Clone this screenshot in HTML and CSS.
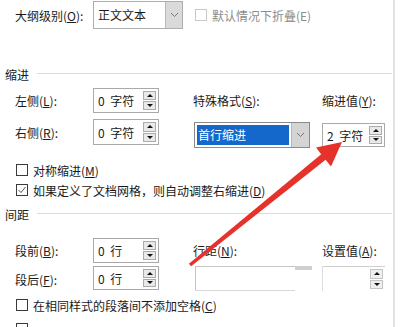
FILE: index.html
```html
<!DOCTYPE html>
<html lang="zh-CN">
<head>
<meta charset="utf-8">
<title>段落</title>
<link rel="stylesheet" href="styles.css">
</head>
<body>

<div class="dlg">

	<div class="row row-outline">
		<span class="lbl lbl-wide">大纲级别(<u>O</u>):</span>
		<div class="combo combo-outline">
			<span class="combo-text">正文文本</span>
			<span class="drop"><svg width="9" height="6" viewBox="0 0 9 6"><polyline points="1,1 4.5,4.5 8,1" fill="none" stroke="#777" stroke-width="1"/></svg></span>
		</div>
		<label class="chk chk-off"><span class="box"></span>默认情况下折叠(E)</label>
	</div>

	<div class="sect sect-indent"><span>缩进</span><i class="rule"></i></div>

	<div class="grid row-left">
		<span class="lbl">左侧(<u>L</u>):</span>
		<div class="num"><span class="val">0 字符</span><span class="spin"><b class="up"></b><b class="down"></b></span></div>
		<span class="lbl">特殊格式(<u>S</u>):</span>
		<span class="lbl">缩进值(<u>Y</u>):</span>
	</div>

	<div class="grid row-right">
		<span class="lbl lbl-tall">右侧(<u>R</u>):</span>
		<div class="num num-right"><span class="val">0 字符</span><span class="spin"><b class="up"></b><b class="down"></b></span></div>
		<div class="combo combo-sel">
			<span class="combo-text"><span class="hl">首行缩进</span></span>
			<span class="drop"><svg width="9" height="6" viewBox="0 0 9 6"><polyline points="1,1 4.5,4.5 8,1" fill="none" stroke="#777" stroke-width="1"/></svg></span>
		</div>
		<div class="num num-chars"><span class="val">2 字符</span><span class="spin"><b class="up"></b><b class="down"></b></span></div>
	</div>

	<label class="chk chk-mirror"><span class="box"></span>对称缩进(<u>M</u>)</label>
	<label class="chk chk-grid"><span class="box box-on"><svg width="10" height="10" viewBox="0 0 10 10"><polyline points="1.5,5 4,7.5 8.5,2" fill="none" stroke="#555" stroke-width="1"/></svg></span>如果定义了文档网格，则自动调整右缩进(<u>D</u>)</label>

	<div class="sect sect-space"><span>间距</span><i class="rule"></i></div>

	<div class="grid row-before">
		<span class="lbl">段前(<u>B</u>):</span>
		<div class="num num-before"><span class="val">0 行</span><span class="spin"><b class="up"></b><b class="down"></b></span></div>
		<span class="lbl">行距(<u>N</u>):</span>
		<span class="lbl">设置值(<u>A</u>):</span>
	</div>

	<div class="grid row-after">
		<span class="lbl lbl-tall">段后(<u>F</u>):</span>
		<div class="num num-after"><span class="val">0 行</span><span class="spin"><b class="up"></b><b class="down"></b></span></div>
		<div class="faint-combo"><i class="faint-drop"></i></div>
		<div class="faint-num"><span class="spin"><b class="up"></b><b class="down"></b></span></div>
	</div>

	<label class="chk chk-nospace"><span class="box"></span>在相同样式的段落间不添加空格(<u>C</u>)</label>
	<label class="chk chk-last"><span class="box"></span></label>

	<svg class="arrow" width="400" height="327" viewBox="0 0 400 327">
		<polygon points="188.9,263.8 321.2,154.2 316,147.5 342,142 331,166.5 325.6,159.8 191.1,266.2" fill="#e5332c"/>
	</svg>

</div>

</body>
</html>
```

FILE: styles.css
```css
html, body {
	margin: 0;
	padding: 0;
	height: 100%;
	overflow: hidden;
}

body {
	background: #fff;
	font-family: "Noto Sans CJK SC", "Microsoft YaHei", sans-serif;
	font-size: 12px;
	color: #1a1a1a;
}

u {
	text-decoration: underline;
	text-underline-offset: 1px;
}

.dlg {
	position: relative;
	width: 393px;
	height: 327px;
	border-right: 2px solid #e2e2e2;
}

/* rows */
.row {
	display: flex;
	align-items: center;
	height: 28px;
	padding-left: 15px;
}

.row-outline {
	padding-top: 1px;
}

.lbl-wide {
	width: 78px;
}

.grid {
	display: grid;
	grid-template-columns: 78px 100px 129px 71px;
	padding-left: 15px;
	align-items: center;
}

.lbl-tall {
	line-height: 27px;
}

.row-left {
	margin-top: 6px;
	height: 25px;
}

.row-right {
	margin-top: 6px;
	height: 30px;
	align-items: start;
}

.row-before {
	margin-top: 16px;
	height: 24px;
}

.row-after {
	margin-top: 4px;
	height: 25px;
	align-items: start;
}

/* section headings */
.sect {
	display: flex;
	align-items: center;
	height: 16px;
	padding-left: 5px;
}

.sect .rule {
	flex: 1;
	height: 1px;
	background: #dcdcdc;
	margin: -2px 1px 0 8px;
}

.sect-indent {
	margin-top: 37px;
}

.sect-space {
	margin-top: 8px;
}

/* combo boxes */
.combo {
	box-sizing: border-box;
	display: flex;
	height: 28px;
	border: 1px solid #adadad;
	background: #fff;
}

.combo-outline {
	width: 90px;
}

.combo-text {
	flex: 1;
	padding-left: 4px;
	line-height: 26px;
}

.drop {
	width: 16px;
	background: #dadada;
	border-left: 1px solid #b8b8b8;
	display: flex;
	align-items: center;
	justify-content: center;
}

.combo-sel {
	width: 116px;
	height: 26px;
	margin: 3px 0 0 1px;
	border-color: #8a8a8a;
}

.combo-sel .combo-text {
	padding: 2px;
	line-height: 20px;
}

.combo-sel .hl {
	display: block;
	height: 20px;
	background: #1468cc;
	color: #fff;
	padding-left: 1px;
}

.combo-sel .drop {
	width: 17px;
	background: #d4d4d4;
}

/* spin inputs */
.num {
	box-sizing: border-box;
	width: 66px;
	height: 25px;
	border: 1px solid #a9a9a9;
	display: flex;
	align-items: center;
	padding-left: 4px;
	background: #fff;
}

.num .val {
	flex: 1;
	white-space: pre;
	word-spacing: 3px;
}

.num-right {
	height: 26px;
}

.num-chars {
	width: 63px;
	height: 24px;
	margin-top: 4px;
}

.num-after {
	height: 24px;
}

.spin {
	box-sizing: border-box;
	width: 13px;
	height: 100%;
	padding: 2px 0;
	margin-right: 2px;
	display: flex;
	flex-direction: column;
	gap: 1px;
}

.spin b {
	flex: 1;
	box-sizing: border-box;
	border: 1px solid #ababab;
	background: #e9e9e9;
	display: flex;
	align-items: center;
	justify-content: center;
}

.spin .up:after,
.spin .down:after {
	content: '';
	border-left: 3px solid transparent;
	border-right: 3px solid transparent;
}

.spin .up:after {
	border-bottom: 3px solid #111;
}

.spin .down:after {
	border-top: 3px solid #111;
}

/* faded line spacing controls */
.faint-combo {
	box-sizing: border-box;
	position: relative;
	width: 100px;
	height: 25px;
	margin-left: 2px;
	border: 1px solid #c6c6c6;
	border-right: none;
	border-bottom-color: #d8d8d8;
}

.faint-drop {
	position: absolute;
	top: -1px;
	right: -17px;
	width: 17px;
	height: 4px;
	background: #cfcfcf;
}

.faint-num {
	box-sizing: border-box;
	width: 63px;
	height: 25px;
	border-top: 1px solid #cfcfcf;
	border-left: 1px solid #dedede;
	display: flex;
	justify-content: flex-end;
}

.faint-num .spin b {
	border-color: #c4c4c4;
	background: #efefef;
}

/* check boxes */
.chk {
	display: flex;
	align-items: center;
	height: 16px;
	padding-left: 16px;
}

.row .chk {
	padding-left: 12px;
}

.box {
	box-sizing: border-box;
	width: 12px;
	height: 12px;
	border: 1px solid #3a3a3a;
	background: #fff;
	margin-right: 5px;
	display: flex;
	align-items: center;
	justify-content: center;
}

.chk-off {
	color: #8c8c8c;
}

.chk-off .box {
	border-color: #c8c8c8;
}

.chk-mirror {
	margin-top: 13px;
}

.chk-grid {
	margin-top: 4px;
}

.chk-nospace {
	margin-top: 6px;
}

.chk-last {
	margin-top: 8px;
}

/* annotation arrow over the dialog */
.arrow {
	position: absolute;
	left: 0;
	top: 0;
	pointer-events: none;
}
```
